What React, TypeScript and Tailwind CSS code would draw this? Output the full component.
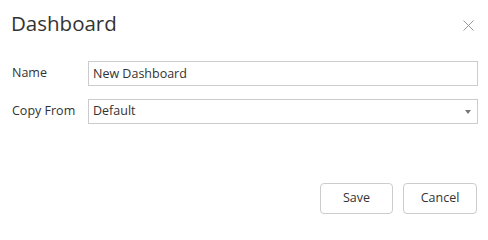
import { useState } from 'react';

export default function App() {
  const [name, setName] = useState('New Dashboard');

  return (
    <div
      className="w-[488px] h-[222px] bg-white text-[#333] flex flex-col"
      style={{ fontFamily: '"Open Sans", "Noto Sans", sans-serif' }}
    >
      <div className="flex items-start justify-between pl-[11px] pr-[14px] pt-[9px] h-[48px]">
        <h1 className="text-[20.5px] leading-[28px] font-normal text-[#333]">Dashboard</h1>
        <button className="mt-[11px] text-[#999]" aria-label="Close">
          <svg width="11" height="11" viewBox="0 0 11 11" fill="none" stroke="currentColor" strokeWidth="1">
            <path d="M0.5 0.5 L10.5 10.5 M10.5 0.5 L0.5 10.5" />
          </svg>
        </button>
      </div>

      <div className="flex flex-col gap-[13px] pl-[12px] pr-[10px] mt-[13px]">
        <div className="flex items-center">
          <label className="w-[76px] text-[12.5px]">Name</label>
          <input
            value={name}
            onChange={(e) => setName(e.target.value)}
            className="flex-1 h-[25px] border border-[#ccc] px-[4px] text-[12.5px] text-[#333] outline-none"
          />
        </div>
        <div className="flex items-center">
          <label className="w-[76px] text-[12.5px]">Copy From</label>
          <div className="flex-1 h-[25px] border border-[#ccc] pl-[4px] pr-[6px] flex items-center justify-between text-[12.5px]">
            <span>Default</span>
            <svg width="6" height="4" viewBox="0 0 6 4" className="text-[#777]">
              <path d="M0 0 H6 L3 4 Z" fill="currentColor" />
            </svg>
          </div>
        </div>
      </div>

      <div className="mt-auto flex justify-end gap-[10px] pr-[11px] pb-[8px]">
        <button className="w-[73px] h-[31px] border border-[#ccc] rounded-[4px] text-[12.5px] text-[#333] bg-white">
          Save
        </button>
        <button className="w-[74px] h-[31px] border border-[#ccc] rounded-[4px] text-[12.5px] text-[#333] bg-white">
          Cancel
        </button>
      </div>
    </div>
  );
}
